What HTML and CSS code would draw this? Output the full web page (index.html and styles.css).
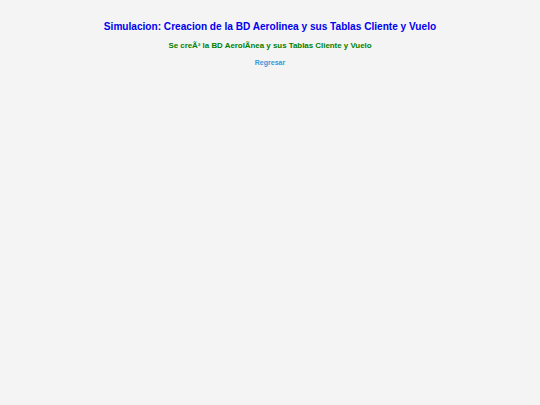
FILE: index.html
```html
<!DOCTYPE html>
<html>
<head>
<meta charset="utf-8">
<link rel="stylesheet" href="styles.css">
</head>
<body>
<div class="page">
<h1 class="title">Simulacion: Creacion de la BD Aerolinea y sus Tablas Cliente y Vuelo</h1>
<p class="msg">Se creÃ³ la BD AerolÃ&shy;nea y sus Tablas Cliente y Vuelo</p>
<a class="back" href="#">Regresar</a>
</div>
</body>
</html>
```
FILE: styles.css
```css
html, body {
  margin: 0;
  padding: 0;
  background: #f4f4f4;
  font-family: "Liberation Sans", Arial, sans-serif;
}
.page {
  display: flex;
  flex-direction: column;
  align-items: center;
  padding-top: 21px;
}
.title {
  margin: 0;
  font-size: 10.1px;
  font-weight: bold;
  color: #0000ee;
  line-height: 12px;
}
.msg {
  margin: 8px 0 0;
  font-size: 7.9px;
  font-weight: bold;
  color: #008000;
  line-height: 10px;
}
.back {
  margin-top: 7px;
  font-size: 7px;
  font-weight: bold;
  color: #3498db;
  text-decoration: none;
  line-height: 9px;
}
```
